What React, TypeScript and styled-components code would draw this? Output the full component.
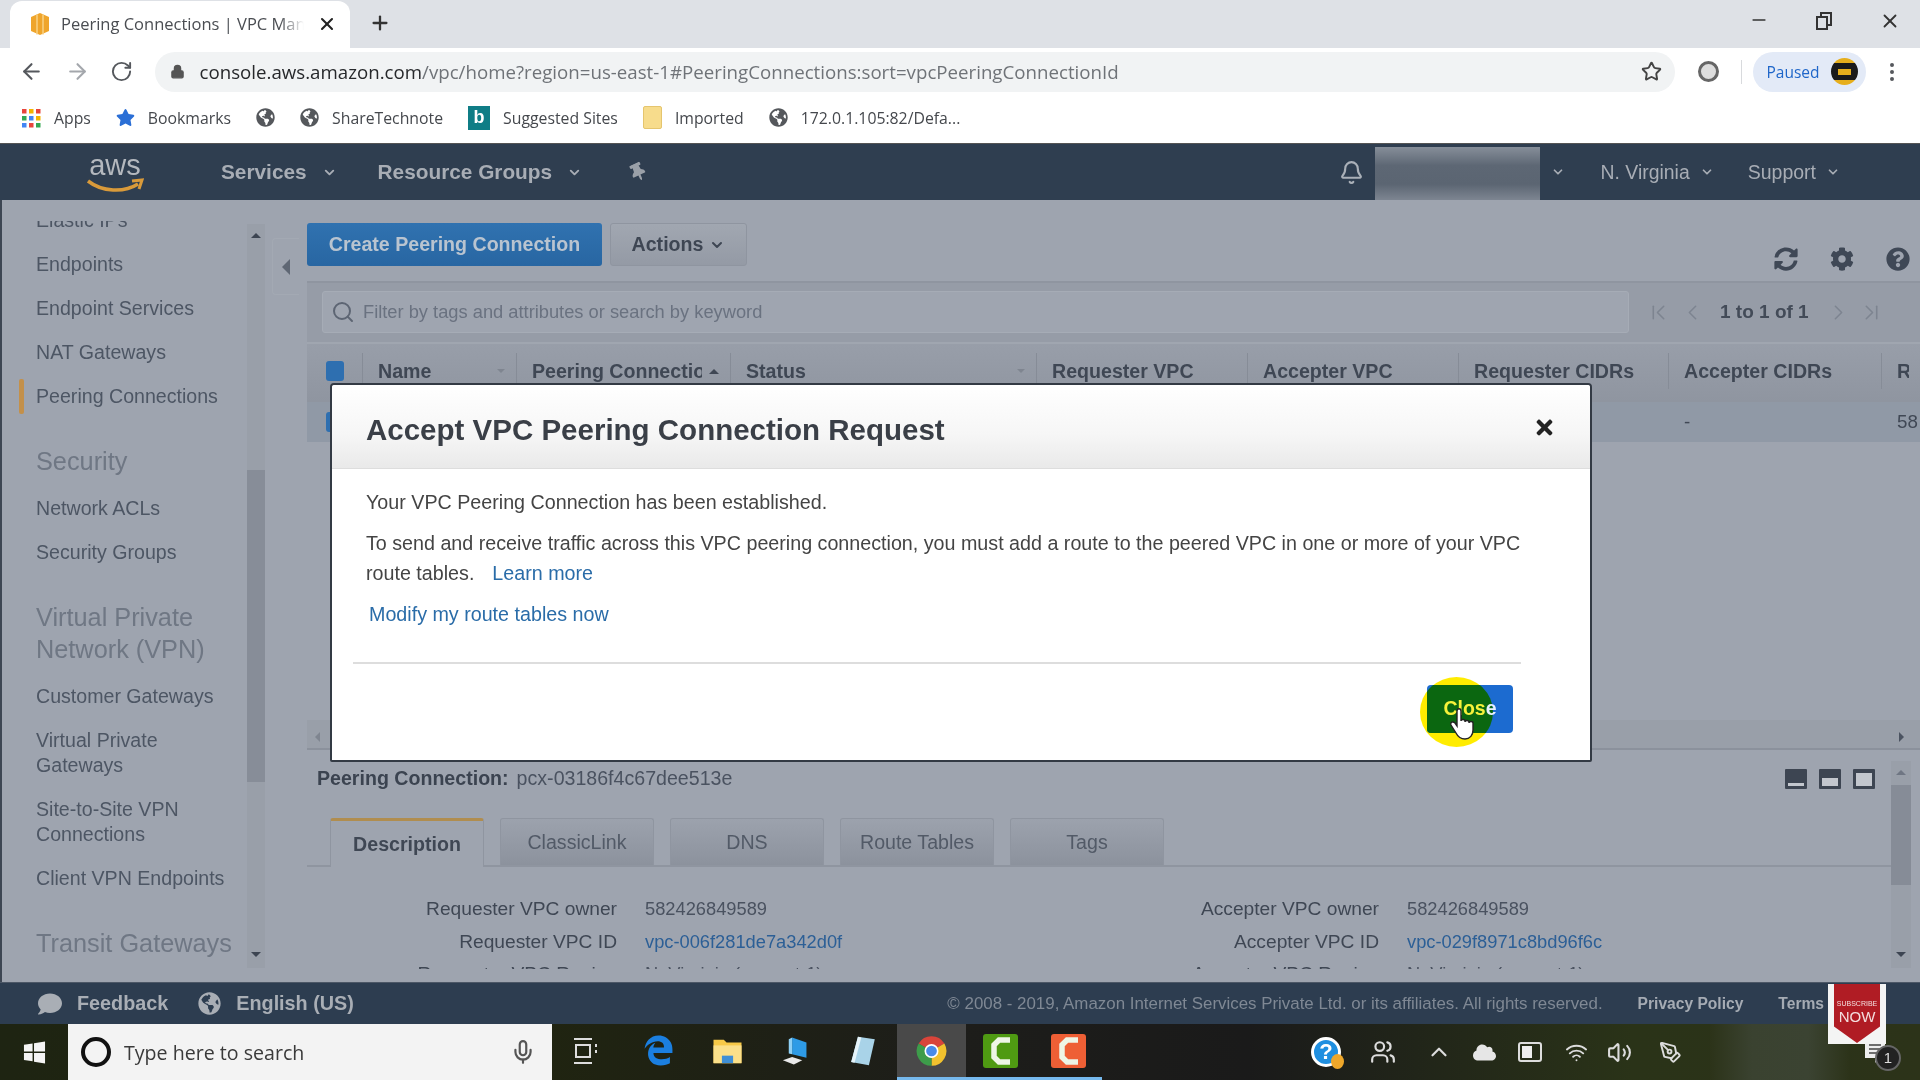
import React from "react";
import styled, { createGlobalStyle } from "styled-components";
import {
  ArrowLeft,
  ArrowRight,
  RotateCw,
  Lock,
  Star,
  MoreVertical,
  Plus,
  X,
  Minus,
  Bell,
  ChevronDown,
  Search,
  Mic,
  ChevronUp,
  Users,
  Wifi,
  Volume2,
  PenTool,
  ChevronLeft,
  ChevronRight,
  ChevronFirst,
  ChevronLast,
} from "lucide-react";
import {
  FaCog,
  FaGlobeAmericas,
  FaQuestionCircle,
  FaStar,
  FaSyncAlt,
  FaTimes,
  FaThumbtack,
  FaComment,
  FaCloud,
} from "react-icons/fa";
import { FaEdgeLegacy } from "react-icons/fa6";

const AWS_FONT = `"Liberation Sans", Arial, sans-serif`;
const UI_FONT = `"Open Sans", "Noto Sans", sans-serif`;

const GlobalStyle = createGlobalStyle`
  html, body {
    margin: 0;
    padding: 0;
    background: #9ea4af;
    overflow: hidden;
  }
`;

const Screen = styled.div`
  width: 1920px;
  height: 1080px;
  display: flex;
  flex-direction: column;
  overflow: hidden;
  position: relative;
  font-family: ${AWS_FONT};
  filter: blur(0.55px);
`;

/* browser chrome */
const TabStrip = styled.div`
  height: 48px;
  flex: none;
  background: #dee1e6;
  display: flex;
  align-items: flex-end;
  padding-left: 10px;
`;

const Tab = styled.div`
  width: 340px;
  height: 47px;
  box-sizing: border-box;
  background: #fff;
  border-radius: 12px 12px 0 0;
  display: flex;
  align-items: center;
  padding: 0 0 2px 19px;
  font: 16.5px ${UI_FONT};
  color: #4a4d52;
`;

const TabTitle = styled.span`
  width: 243px;
  margin-left: 10px;
  white-space: nowrap;
  overflow: hidden;
  -webkit-mask-image: linear-gradient(90deg, #000 90%, transparent);
  mask-image: linear-gradient(90deg, #000 90%, transparent);
`;

const TabClose = styled(X)`
  margin-left: 13px;
  color: #222;
`;

const NewTab = styled(Plus)`
  margin: 0 0 14px 19px;
  color: #333;
`;

const WindowControls = styled.div`
  margin-left: auto;
  height: 48px;
  box-sizing: border-box;
  display: flex;
  align-items: flex-start;
  gap: 45px;
  padding: 10px 19px 0 0;
  color: #333;
`;

const Toolbar = styled.div`
  height: 47px;
  flex: none;
  background: #fff;
  display: flex;
  align-items: center;
  padding-left: 19px;
  color: #5f6368;
`;

const NavArrow = styled.span<{ $faded?: boolean }>`
  width: 45.5px;
  display: flex;
  color: ${(p) => (p.$faded ? "#a4a7ac" : "#55585d")};
`;

const UrlPill = styled.div`
  width: 1520px;
  height: 40px;
  margin-left: -1px;
  box-sizing: border-box;
  background: #f1f3f4;
  border-radius: 20px;
  display: flex;
  align-items: center;
  padding: 0 13px 0 15px;
`;

const UrlText = styled.div`
  margin-left: 15px;
  font: 18.7px ${UI_FONT};
  color: #6f7378;
  white-space: nowrap;
  flex: 1;
`;

const UrlHost = styled.span`
  color: #26282b;
`;

const ExtensionDot = styled.span`
  width: 15px;
  height: 15px;
  margin-left: 23px;
  border-radius: 50%;
  border: 3px solid #666;
  background: #ddd;
`;

const ToolbarRule = styled.span`
  width: 1px;
  height: 24px;
  margin: 0 11px 0 22px;
  background: #d8dadd;
`;

const PausedPill = styled.div`
  width: 113px;
  height: 40px;
  box-sizing: border-box;
  background: #e3eaf7;
  border-radius: 20px;
  display: flex;
  align-items: center;
  padding-left: 14px;
  font: 15.5px ${UI_FONT};
  color: #1f66c9;
`;

const Avatar = styled.span`
  width: 27px;
  height: 27px;
  margin-left: 11px;
  border-radius: 50%;
  background: linear-gradient(#e6ae1c 0 20%, #1a1a1a 20% 80%, #e6ae1c 80%);
  display: flex;
  align-items: center;
  justify-content: center;
  &::after {
    content: "";
    width: 13px;
    height: 6px;
    background: #e6ae1c;
  }
`;

const MenuDots = styled(MoreVertical)`
  margin-left: 14px;
  color: #55585d;
`;

const BookmarksBar = styled.div`
  height: 48px;
  flex: none;
  box-sizing: border-box;
  padding: 0 0 3px 21px;
  background: #fff;
  display: flex;
  align-items: center;
  font: 15.8px ${UI_FONT};
  color: #45484d;
`;

const Bookmark = styled.span`
  display: flex;
  align-items: center;
  gap: 13px;
  margin-right: 25px;
  white-space: nowrap;
`;

const BookmarkGlobe = styled(FaGlobeAmericas)`
  color: #55585c;
  font-size: 19px;
`;

const BingSquare = styled.span`
  width: 22px;
  height: 24px;
  background: #0f7d86;
  color: #fff;
  font: bold 18px ${AWS_FONT};
  display: flex;
  align-items: center;
  justify-content: center;
`;

const FolderTile = styled.span`
  width: 17px;
  height: 21px;
  background: #f7dc8c;
  border: 1px solid #e5c56e;
  border-radius: 2px;
`;

/* aws console header */
const ConsoleNav = styled.div`
  height: 57px;
  flex: none;
  background: #2f3e50;
  border-top: 1px solid #555;
  box-sizing: border-box;
  display: flex;
  align-items: center;
  color: #a8adb5;
  font: bold 20px ${AWS_FONT};
`;

const AwsLogo = styled.div`
  width: 60px;
  margin: 4px 0 0 85px;
  display: flex;
  flex-direction: column;
  align-items: center;
  font: 29px/26px ${AWS_FONT};
  color: #b4b8be;
`;

const NavMenu = styled.span<{ $left: number; $weight?: number; $size?: number; $gap?: number }>`
  display: flex;
  align-items: center;
  gap: ${(p) => p.$gap ?? 15}px;
  margin-left: ${(p) => p.$left}px;
  font-weight: ${(p) => p.$weight ?? 700};
  font-size: ${(p) => p.$size ?? 20.8}px;
  white-space: nowrap;
`;

const Pin = styled(FaThumbtack)`
  margin-left: 47px;
  font-size: 18px;
  color: #9aa0a8;
  transform: rotate(-25deg);
`;

const NavBell = styled(Bell)`
  margin-left: auto;
  color: #aab0b8;
`;

const AccountBlur = styled.div`
  width: 165px;
  height: 53px;
  margin: 3px 0 0 11px;
  background: linear-gradient(#868e99, #5d6774 35%, #5b6572 70%, #7d8591);
`;

const Caret = styled(ChevronDown)`
  stroke-width: 3;
`;

const AccountCaret = styled(Caret)`
  margin: 0 36px 0 11px;
`;

/* page body */
const Body = styled.div`
  flex: 1;
  min-height: 0;
  display: flex;
  background: #9ea4af;
  border-left: 2px solid #3d4653;
`;

const Sidebar = styled.aside`
  width: 305px;
  flex: none;
  display: flex;
  align-items: flex-start;
  padding-top: 21px;
  box-sizing: border-box;
`;

const SideScroll = styled.div`
  width: 245px;
  height: 747px;
  overflow: hidden;
`;

const SideList = styled.div`
  margin-top: -22.5px;
  padding-left: 34px;
  width: 205px;
`;

const SideItem = styled.div<{ $active?: boolean }>`
  position: relative;
  padding: 9.5px 0;
  font-size: 19.6px;
  line-height: 25px;
  color: #4d5664;
  ${(p) =>
    p.$active &&
    `&::before {
      content: "";
      position: absolute;
      left: -17px;
      top: 4px;
      bottom: 5px;
      width: 5px;
      background: #c3904a;
      border-radius: 2px;
    }`}
`;

const SideHeading = styled.div`
  padding: 26px 0 10px;
  font-size: 25.3px;
  line-height: 32px;
  color: #6f7784;
`;

const SideTrack = styled.div`
  width: 18px;
  height: 744px;
  margin-top: 3px;
  background: #999fa9;
  display: flex;
  flex-direction: column;
  align-items: center;
  justify-content: space-between;
  position: relative;
`;

const SideThumb = styled.div`
  position: absolute;
  top: 246px;
  left: 0;
  right: 0;
  height: 312px;
  background: #878d98;
`;

const Triangle = styled.span<{ $dir: "up" | "down" | "left" | "right"; $size?: number; $color?: string }>`
  width: 0;
  height: 0;
  flex: none;
  ${(p) => {
    const s = p.$size ?? 5;
    const c = p.$color ?? "#3d4552";
    if (p.$dir === "up") return `border-left:${s}px solid transparent;border-right:${s}px solid transparent;border-bottom:${s}px solid ${c};`;
    if (p.$dir === "down") return `border-left:${s}px solid transparent;border-right:${s}px solid transparent;border-top:${s}px solid ${c};`;
    if (p.$dir === "left") return `border-top:${s}px solid transparent;border-bottom:${s}px solid transparent;border-right:${s}px solid ${c};`;
    return `border-top:${s}px solid transparent;border-bottom:${s}px solid transparent;border-left:${s}px solid ${c};`;
  }}
`;

const TrackArrowUp = styled(Triangle)`
  margin-top: 9px;
`;

const TrackArrowDown = styled(Triangle)`
  margin-bottom: 11px;
`;

const CollapseTab = styled.div`
  width: 26px;
  height: 55px;
  margin: 17px 0 0 7px;
  border: 1px solid #a3a9b3;
  border-right: none;
  border-radius: 4px 0 0 4px;
  display: flex;
  align-items: center;
  justify-content: center;
`;

const Main = styled.main`
  flex: 1;
  min-width: 0;
  display: flex;
  flex-direction: column;
`;

const ActionRow = styled.div`
  height: 81px;
  flex: none;
  box-sizing: border-box;
  padding: 23px 10px 0 0;
  display: flex;
  align-items: flex-start;
`;

const PrimaryButton = styled.div`
  width: 295px;
  height: 43px;
  border-radius: 3px;
  background: linear-gradient(#3072b0, #2866a2);
  color: #b9c4d0;
  font: bold 19.6px/43px ${AWS_FONT};
  text-align: center;
`;

const ActionsButton = styled.div`
  width: 137px;
  height: 43px;
  margin-left: 8px;
  box-sizing: border-box;
  border: 1px solid #8f95a0;
  border-radius: 3px;
  background: linear-gradient(#a1a7b1, #949aa5);
  color: #3e4653;
  font: bold 19.6px ${AWS_FONT};
  display: flex;
  align-items: center;
  justify-content: center;
  gap: 6px;
`;

const PageIcons = styled.div`
  margin: 24px 0 0 auto;
  display: flex;
  align-items: center;
  gap: 32px;
  color: #3f4856;
  font-size: 24px;
`;

const FilterBand = styled.div`
  height: 61px;
  flex: none;
  box-sizing: border-box;
  background: #969ca7;
  border-top: 2px solid #8f95a0;
  padding: 8px 0 0 15px;
  display: flex;
  align-items: flex-start;
`;

const FilterBox = styled.div`
  width: 1307px;
  height: 42px;
  box-sizing: border-box;
  background: #9fa5b0;
  border: 1px solid #a6acb6;
  border-radius: 3px;
  padding-left: 8px;
  display: flex;
  align-items: center;
  gap: 8px;
  font-size: 18.3px;
  color: #6a7280;
`;

const Pager = styled.div`
  margin: 4px 0 0 17px;
  height: 34px;
  display: flex;
  align-items: center;
  color: #7d8490;
  font: bold 19px ${AWS_FONT};
`;

const PagerFirst = styled(ChevronFirst)`
  margin-right: 9px;
`;

const PagerLast = styled(ChevronLast)`
  margin-left: 8px;
`;

const PagerText = styled.span`
  margin: 0 17px 0 15px;
  color: #434b58;
`;

const TableHead = styled.div`
  height: 60px;
  flex: none;
  display: grid;
  grid-template-columns: 55px 154px 214px 306px 211px 211px 210px 213px 1fr;
  box-sizing: border-box;
  padding-top: 9px;
  background: linear-gradient(#989ea9, #8f95a0);
  border-top: 2px solid #a0a6b0;
  overflow: hidden;
`;

const HeadCell = styled.div`
  height: 36px;
  display: flex;
  align-items: center;
  gap: 7px;
  padding: 0 11px 0 15px;
  border-left: 1px solid #868c97;
  font: bold 19.6px ${AWS_FONT};
  color: #3f4754;
  white-space: nowrap;
  overflow: hidden;
`;

const HeadLabel = styled.span`
  flex: 1;
  min-width: 0;
  overflow: hidden;
`;

const CheckCell = styled.div`
  height: 36px;
  padding-left: 19px;
  display: flex;
  align-items: center;
`;

const CheckBlue = styled.span`
  width: 18px;
  height: 20px;
  border-radius: 3px;
  background: #2e6fb0;
`;

const TableRow = styled.div`
  height: 40px;
  flex: none;
  background: #9099a6;
  display: grid;
  grid-template-columns: 55px 154px 214px 306px 211px 211px 210px 213px 1fr;
  align-items: center;
  font-size: 18.8px;
  color: #404855;
  overflow: hidden;
`;

const RowCell = styled.div<{ $col?: number }>`
  grid-column: ${(p) => p.$col ?? "auto"};
  padding-left: 16px;
  white-space: nowrap;
`;

const TableSpace = styled.div`
  flex: 1;
  min-height: 0;
  display: flex;
  align-items: flex-end;
`;

const HScroll = styled.div`
  flex: 1;
  height: 30px;
  box-sizing: border-box;
  background: #999fa9;
  border-bottom: 2px solid #8b919c;
  display: flex;
  align-items: center;
  justify-content: space-between;
  padding: 6px 16px 0 8px;
`;

const DetailPane = styled.div`
  height: 232px;
  flex: none;
  display: flex;
  overflow: hidden;
`;

const DetailMain = styled.div`
  flex: 1;
  min-width: 0;
  display: flex;
  flex-direction: column;
`;

const PaneTitleRow = styled.div`
  height: 52px;
  flex: none;
  box-sizing: border-box;
  display: flex;
  align-items: center;
  padding: 5px 16px 0 10px;
  font-size: 19.6px;
  color: #4a5260;
`;

const PaneTitle = styled.b`
  color: #3b4350;
  margin-right: 8px;
`;

const PaneSize = styled.div`
  margin-left: auto;
  display: flex;
  gap: 12px;
`;

const SizeIcon = styled.span<{ $fill: number }>`
  width: 22px;
  height: 20px;
  background: #3d4552;
  border-radius: 1px;
  box-sizing: border-box;
  padding: 0 3px 3px;
  display: flex;
  align-items: flex-end;
  &::after {
    content: "";
    width: 100%;
    height: ${(p) => p.$fill}px;
    background: #c3c7ce;
  }
`;

const TabBar = styled.div`
  height: 47px;
  margin-top: 16px;
  flex: none;
  padding-left: 23px;
  display: flex;
  gap: 16px;
  border-bottom: 2px solid #8f95a0;
`;

const PaneTab = styled.div<{ $active?: boolean }>`
  width: 154px;
  box-sizing: border-box;
  display: flex;
  align-items: center;
  justify-content: center;
  border: 1px solid #8f95a0;
  border-bottom: none;
  border-radius: 3px 3px 0 0;
  font-size: 19.6px;
  font-weight: ${(p) => (p.$active ? 700 : 400)};
  color: ${(p) => (p.$active ? "#3f4754" : "#525a67")};
  background: ${(p) => (p.$active ? "#9ea4af" : "linear-gradient(#9ca2ad, #8c929d)")};
  border-top: ${(p) => (p.$active ? "3px solid #b08d4f" : "1px solid #8f95a0")};
  margin-bottom: ${(p) => (p.$active ? "-2px" : "0")};
`;

const DetailGrid = styled.div`
  height: 102px;
  padding-top: 26px;
  box-sizing: border-box;
  overflow: hidden;
  display: flex;
`;

const DetailColumn = styled.div<{ $width: number; $label: number }>`
  width: ${(p) => p.$width}px;
  flex: none;
  display: grid;
  grid-template-columns: ${(p) => p.$label}px 1fr;
  column-gap: 28px;
  grid-auto-rows: 32.5px;
  align-items: center;
  white-space: nowrap;
`;

const DetailLabel = styled.span`
  text-align: right;
  font-size: 19.2px;
  color: #3f4754;
`;

const DetailValue = styled.span`
  font-size: 18.3px;
  color: #4a5260;
`;

const DetailLink = styled(DetailValue)`
  color: #2c5f96;
`;

const PaneScroll = styled.div`
  width: 20px;
  height: 207px;
  margin: 11px 9px 0 0;
  flex: none;
  background: #999fa9;
  display: flex;
  flex-direction: column;
  align-items: center;
  justify-content: space-between;
  position: relative;
`;

const PaneThumb = styled.div`
  position: absolute;
  top: 24px;
  left: 0;
  right: 0;
  height: 100px;
  background: #868c97;
`;

/* footer + taskbar */
const Footer = styled.footer`
  height: 42px;
  flex: none;
  background: #2d3d50;
  border-top: 1px solid #4c5766;
  box-sizing: border-box;
  display: flex;
  align-items: center;
  color: #a9aeb5;
  font: bold 19.8px ${AWS_FONT};
  padding: 0 44px 0 38px;
`;

const FootItem = styled.span<{ $left?: number }>`
  display: flex;
  align-items: center;
  gap: 15px;
  margin-left: ${(p) => p.$left ?? 0}px;
  white-space: nowrap;
`;

const Copyright = styled.span`
  margin-left: auto;
  font: 16.9px ${AWS_FONT};
  color: #7f8894;
  white-space: nowrap;
`;

const FootLink = styled.span`
  margin-left: 35px;
  font: bold 15.6px ${AWS_FONT};
  color: #a5abb3;
  white-space: nowrap;
`;

const Taskbar = styled.div`
  height: 56px;
  flex: none;
  display: flex;
  align-items: center;
  background: linear-gradient(90deg, #1e2412 0, #20250f 25%, #1d1d1a 50%, #1a1a1a 65%, #2a3318 85%, #2c3319);
  color: #ddd;
`;

const StartButton = styled.div`
  width: 68px;
  display: flex;
  justify-content: center;
`;

const SearchBox = styled.div`
  width: 484px;
  height: 56px;
  box-sizing: border-box;
  background: #f3f3f3;
  padding: 0 16px 0 13px;
  display: flex;
  align-items: center;
  font: 19.6px ${UI_FONT};
  color: #3a3a3a;
`;

const CortanaRing = styled.span`
  width: 22px;
  height: 22px;
  border: 4px solid #111;
  border-radius: 50%;
  margin-right: 13px;
`;

const SearchMic = styled(Mic)`
  margin-left: auto;
  color: #555;
`;

const TaskSlot = styled.div<{ $width: number; $active?: boolean; $running?: boolean; $trail?: number }>`
  width: ${(p) => p.$width}px;
  height: 56px;
  box-sizing: border-box;
  flex: none;
  display: flex;
  align-items: center;
  justify-content: center;
  padding-right: ${(p) => p.$trail ?? 0}px;
  background: ${(p) => (p.$active ? "#494949" : "transparent")};
  border-bottom: 3px solid ${(p) => (p.$running ? "#76b9ed" : "transparent")};
`;

const EdgeIcon = styled(FaEdgeLegacy)`
  color: #1b7fe0;
  font-size: 31px;
`;

const Tray = styled.div`
  margin-left: auto;
  height: 56px;
  display: flex;
  align-items: center;
  color: #dcdcdc;
`;

const TrayItem = styled.span<{ $width: number }>`
  width: ${(p) => p.$width}px;
  display: flex;
  justify-content: center;
`;

const HelpBadge = styled.span`
  width: 30px;
  height: 30px;
  box-sizing: border-box;
  border: 3px solid #fff;
  border-radius: 50%;
  background: #1f8fe0;
  color: #fff;
  font: bold 22px/24px ${AWS_FONT};
  text-align: center;
  position: relative;
  &::after {
    content: "";
    position: absolute;
    right: -6px;
    bottom: -5px;
    width: 13px;
    height: 15px;
    border-radius: 50%;
    background: #eea72a;
  }
`;

const ClockBlur = styled.div`
  width: 140px;
  height: 56px;
  margin-left: 20px;
  background: linear-gradient(90deg, #2c3319, #3a4230 30%, #3b4332 70%, #2c3319);
`;

const NotifyArea = styled.div`
  width: 70px;
  box-sizing: border-box;
  padding-right: 20px;
  display: flex;
  justify-content: center;
  position: relative;
`;

const NotifyCount = styled.span`
  position: absolute;
  left: 25px;
  top: 6px;
  width: 22px;
  height: 22px;
  border-radius: 50%;
  border: 2px solid #666;
  background: #222;
  color: #ddd;
  font: 15px/22px ${AWS_FONT};
  text-align: center;
`;

/* things lying over the page */
const Modal = styled.div`
  position: absolute;
  left: 330px;
  top: 383px;
  width: 1262px;
  height: 379px;
  box-sizing: border-box;
  background: #fff;
  border: 2px solid #333a44;
  border-radius: 4px 4px 2px 2px;
  display: flex;
  flex-direction: column;
  color: #444;
`;

const ModalHeader = styled.div`
  height: 84px;
  flex: none;
  box-sizing: border-box;
  padding: 7px 34px 0 34px;
  display: flex;
  align-items: center;
  justify-content: space-between;
  background: linear-gradient(#fff, #f6f6f6 60%, #e9e9e9);
  border-bottom: 1px solid #ddd;
  border-radius: 3px 3px 0 0;
`;

const ModalTitle = styled.h2`
  margin: 0;
  font: bold 29.5px ${AWS_FONT};
  color: #3a3f47;
`;

const ModalClose = styled(FaTimes)`
  margin-top: -6px;
  font-size: 23px;
  color: #222;
`;

const ModalBody = styled.div`
  padding: 18px 34px 0;
  height: 193px;
  box-sizing: border-box;
  flex: none;
  font-size: 19.7px;
  line-height: 30px;
`;

const ModalLine = styled.p`
  margin: 0 0 11px;
`;

const ModalLink = styled.a`
  color: #2a6ca8;
`;

const LearnMore = styled(ModalLink)`
  margin-left: 18px;
`;

const ModifyLink = styled(ModalLink)`
  margin-left: 3px;
`;

const ModalRule = styled.hr`
  margin: 0 0 0 21px;
  width: 1168px;
  border: none;
  border-top: 2px solid #ddd;
  flex: none;
`;

const ModalFooter = styled.div`
  display: flex;
  justify-content: flex-end;
  padding: 21px 77px 0 0;
`;

const Spotlight = styled.div`
  position: relative;
  width: 86px;
  height: 48px;
`;

const SpotCircle = styled.span`
  position: absolute;
  left: -7px;
  top: -8px;
  width: 73px;
  height: 70px;
  border-radius: 50%;
  background: #ffec00;
`;

const CloseButton = styled.div`
  position: absolute;
  inset: 0;
  overflow: hidden;
  border-radius: 4px;
  background: #1c6bd0;
  color: #fff;
  font: bold 19.5px/46px ${AWS_FONT};
  text-align: center;
  &::before {
    content: "";
    position: absolute;
    left: -7px;
    top: -8px;
    width: 73px;
    height: 70px;
    border-radius: 50%;
    background: #0b6710;
  }
`;

const CloseLabel = styled.span`
  position: relative;
  color: #f7f23a;
`;

const CloseTail = styled.span`
  color: #e8f0ff;
`;

const HandCursor = styled.svg`
  position: absolute;
  left: 23px;
  top: 23px;
  width: 24px;
  height: 33px;
`;

const SubscribeBadge = styled.div`
  position: absolute;
  left: 1828px;
  top: 984px;
  width: 58px;
  height: 60px;
  background: #f4f4f4;
  display: flex;
  justify-content: center;
`;

const Ribbon = styled.div`
  width: 46px;
  height: 59px;
  background: #b01c24;
  clip-path: polygon(0 0, 100% 0, 100% 72%, 50% 100%, 0 72%);
  color: #f3dede;
  text-align: center;
  padding-top: 16px;
  box-sizing: border-box;
  font: 7px/8px ${AWS_FONT};
`;

const RibbonNow = styled.div`
  font-size: 15px;
  line-height: 18px;
`;

const sideTop = ["Elastic IPs", "Endpoints", "Endpoint Services", "NAT Gateways"];
const vpnItems = ["Customer Gateways", "Virtual Private Gateways", "Site-to-Site VPN Connections", "Client VPN Endpoints"];
const columns = ["Name", "Peering Connection", "Status", "Requester VPC", "Accepter VPC", "Requester CIDRs", "Accepter CIDRs", "R"];
const paneTabs = ["ClassicLink", "DNS", "Route Tables", "Tags"];

const GlobeIcon = () => <BookmarkGlobe />;

const WinLogo = () => (
  <svg width="23" height="23" viewBox="0 0 24 24" fill="#f4f4f4">
    <path d="M1 4l9-1.4V11H1zM11.5 2.3L23 .6V11H11.5zM1 12.6h9V21l-9-1.3zM11.5 12.6H23v10.8l-11.5-1.7z" />
  </svg>
);

const AppsGrid = () => (
  <svg width="20" height="20" viewBox="0 0 20 20">
    {["#e8453c", "#f4b400", "#e8453c", "#34a853", "#4285f4", "#f4b400", "#4285f4", "#e8453c", "#34a853"].map((c, i) => (
      <rect key={i} x={1 + (i % 3) * 7} y={1 + Math.floor(i / 3) * 7} width="4.5" height="4.5" fill={c} />
    ))}
  </svg>
);

const AwsBox = () => (
  <svg width="22" height="24" viewBox="0 0 22 24">
    <path d="M11 1l9 4v14l-9 4-9-4V5z" fill="#efa52c" />
    <path d="M8 2.5v20M14 2.5v20" stroke="#f9d184" strokeWidth="1.5" />
  </svg>
);

const Smile = () => (
  <svg width="58" height="18" viewBox="0 0 58 18" fill="none">
    <path d="M2 3c14 11 36 12 50 3" stroke="#d99a3a" strokeWidth="3.5" />
    <path d="M46 3l10-1-3 9" stroke="#d99a3a" strokeWidth="3" />
  </svg>
);

const FolderIcon = () => (
  <svg width="31" height="28" viewBox="0 0 32 30">
    <path d="M1 3h11l3 3h16v22H1z" fill="#f7c948" />
    <path d="M1 9h30v19H1z" fill="#fbe08a" />
    <path d="M10 28v-8h12v8z" fill="#3f8fd6" />
  </svg>
);

const ComputerIcon = () => (
  <svg width="31" height="32" viewBox="0 0 36 38">
    <path d="M14 3l17 6v18l-17-4z" fill="#2e9be6" />
    <path d="M14 3l-4 2v17l4 1z" fill="#8fd0f5" />
    <path d="M3 30l11-4 12 4-10 5z" fill="#e9e9e9" />
  </svg>
);

const NotesIcon = () => (
  <svg width="28" height="32" viewBox="0 0 32 38">
    <path d="M10 2l20 3-7 31L2 32z" fill="#a9d3e8" />
    <path d="M10 2l4 1-8 30-4-1z" fill="#e6f3f9" />
  </svg>
);

const ChromeIcon = () => (
  <svg width="33" height="36" viewBox="0 0 40 40">
    <path d="M20 20L4.4 11A18 18 0 0 1 35.6 11Z" fill="#d9443a" />
    <path d="M20 20L35.6 11A18 18 0 0 1 20 38Z" fill="#f2c22e" />
    <path d="M20 20L20 38A18 18 0 0 1 4.4 11Z" fill="#3d9c4a" />
    <circle cx="20" cy="20" r="8.5" fill="#fff" />
    <circle cx="20" cy="20" r="6.5" fill="#4a8be8" />
  </svg>
);

const CamtasiaIcon = ({ color }: { color: string }) => (
  <svg width="35" height="34" viewBox="0 0 35 34">
    <rect width="35" height="34" rx="3" fill={color} />
    <path d="M27 6H16l-5 5v12l5 5h11" stroke="#eef5e6" strokeWidth="5.5" fill="none" />
  </svg>
);

const BatteryIcon = () => (
  <svg width="24" height="22" viewBox="0 0 24 22">
    <rect x="1" y="2" width="22" height="18" rx="2" fill="none" stroke="#ddd" strokeWidth="2" />
    <rect x="4" y="5" width="10" height="12" fill="#eee" />
  </svg>
);

const NotifyIcon = () => (
  <svg width="22" height="26" viewBox="0 0 22 26">
    <path d="M1 1h20v18h-6l-4 5v-5H1z" fill="#eee" />
    <path d="M5 6h12M5 10h12M5 14h12" stroke="#444" strokeWidth="1.5" />
  </svg>
);

export default function App() {
  return (
    <Screen>
      <GlobalStyle />
      <TabStrip>
        <Tab>
          <AwsBox />
          <TabTitle>Peering Connections | VPC Management</TabTitle>
          <TabClose size={20} strokeWidth={2.5} />
        </Tab>
        <NewTab size={22} strokeWidth={2.5} />
        <WindowControls>
          <Minus size={20} />
          <svg width="20" height="22" viewBox="0 0 20 22" fill="none" stroke="#333" strokeWidth="2">
            <rect x="3" y="7" width="10" height="12" />
            <path d="M7 7V3h10v12h-4" />
          </svg>
          <X size={22} />
        </WindowControls>
      </TabStrip>

      <Toolbar>
        <NavArrow>
          <ArrowLeft size={25} />
        </NavArrow>
        <NavArrow $faded>
          <ArrowRight size={25} />
        </NavArrow>
        <NavArrow>
          <RotateCw size={23} />
        </NavArrow>
        <UrlPill>
          <Lock size={15} fill="#555" color="#555" />
          <UrlText>
            <UrlHost>console.aws.amazon.com</UrlHost>/vpc/home?region=us-east-1#PeeringConnections:sort=vpcPeeringConnectionId
          </UrlText>
          <Star size={21} color="#444" strokeWidth={2.2} />
        </UrlPill>
        <ExtensionDot />
        <ToolbarRule />
        <PausedPill>
          Paused
          <Avatar />
        </PausedPill>
        <MenuDots size={24} />
      </Toolbar>

      <BookmarksBar>
        <Bookmark>
          <AppsGrid />
          Apps
        </Bookmark>
        <Bookmark>
          <FaStar color="#2b6fd6" size={19} />
          Bookmarks
        </Bookmark>
        <Bookmark>
          <GlobeIcon />
        </Bookmark>
        <Bookmark>
          <GlobeIcon />
          ShareTechnote
        </Bookmark>
        <Bookmark>
          <BingSquare>b</BingSquare>
          Suggested Sites
        </Bookmark>
        <Bookmark>
          <FolderTile />
          Imported
        </Bookmark>
        <Bookmark>
          <GlobeIcon />
          172.0.1.105:82/Defa...
        </Bookmark>
      </BookmarksBar>

      <ConsoleNav>
        <AwsLogo>
          aws
          <Smile />
        </AwsLogo>
        <NavMenu $left={76}>
          Services
          <Caret size={15} />
        </NavMenu>
        <NavMenu $left={41}>
          Resource Groups
          <Caret size={15} />
        </NavMenu>
        <Pin />
        <NavBell size={25} />
        <AccountBlur />
        <AccountCaret size={14} />
        <NavMenu $left={0} $weight={400} $size={19.4} $gap={10}>
          N. Virginia
          <Caret size={14} />
        </NavMenu>
        <NavMenu $left={34} $weight={400} $size={19.5} $gap={10}>
          Support
          <Caret size={14} />
        </NavMenu>
        <NavMenu $left={80} />
      </ConsoleNav>

      <Body>
        <Sidebar>
          <SideScroll>
            <SideList>
              {sideTop.map((item) => (
                <SideItem key={item}>{item}</SideItem>
              ))}
              <SideItem $active>Peering Connections</SideItem>
              <SideHeading>Security</SideHeading>
              <SideItem>Network ACLs</SideItem>
              <SideItem>Security Groups</SideItem>
              <SideHeading>Virtual Private Network (VPN)</SideHeading>
              {vpnItems.map((item) => (
                <SideItem key={item}>{item}</SideItem>
              ))}
              <SideHeading>Transit Gateways</SideHeading>
            </SideList>
          </SideScroll>
          <SideTrack>
            <TrackArrowUp $dir="up" />
            <SideThumb />
            <TrackArrowDown $dir="down" />
          </SideTrack>
          <CollapseTab>
            <Triangle $dir="left" $size={8} $color="#5f6774" />
          </CollapseTab>
        </Sidebar>

        <Main>
          <ActionRow>
            <PrimaryButton>Create Peering Connection</PrimaryButton>
            <ActionsButton>
              Actions
              <ChevronDown size={16} strokeWidth={3} />
            </ActionsButton>
            <PageIcons>
              <FaSyncAlt />
              <FaCog />
              <FaQuestionCircle />
            </PageIcons>
          </ActionRow>

          <FilterBand>
            <FilterBox>
              <Search size={24} color="#5d6573" />
              Filter by tags and attributes or search by keyword
            </FilterBox>
            <Pager>
              <PagerFirst size={25} strokeWidth={1.5} />
              <ChevronLeft size={25} strokeWidth={1.5} />
              <PagerText>1 to 1 of 1</PagerText>
              <ChevronRight size={25} strokeWidth={1.5} />
              <PagerLast size={25} strokeWidth={1.5} />
            </Pager>
          </FilterBand>

          <TableHead>
            <CheckCell>
              <CheckBlue />
            </CheckCell>
            {columns.map((c, i) => (
              <HeadCell key={c}>
                <HeadLabel>{c}</HeadLabel>
                {i === 0 && <Triangle $dir="down" $size={4} $color="#7f8590" />}
                {i === 1 && <Triangle $dir="up" $size={5} $color="#3f4754" />}
                {i === 2 && <Triangle $dir="down" $size={4} $color="#7f8590" />}
              </HeadCell>
            ))}
          </TableHead>

          <TableRow>
            <CheckCell>
              <CheckBlue />
            </CheckCell>
            <RowCell $col={8}>-</RowCell>
            <RowCell $col={9}>58</RowCell>
          </TableRow>

          <TableSpace>
            <HScroll>
              <Triangle $dir="left" $size={5} $color="#7f8590" />
              <Triangle $dir="right" $size={5} $color="#4b5361" />
            </HScroll>
          </TableSpace>

          <DetailPane>
            <DetailMain>
              <PaneTitleRow>
                <PaneTitle>Peering Connection:</PaneTitle>
                pcx-03186f4c67dee513e
                <PaneSize>
                  <SizeIcon $fill={3} />
                  <SizeIcon $fill={8} />
                  <SizeIcon $fill={13} />
                </PaneSize>
              </PaneTitleRow>
              <TabBar>
                <PaneTab $active>Description</PaneTab>
                {paneTabs.map((t) => (
                  <PaneTab key={t}>{t}</PaneTab>
                ))}
              </TabBar>
              <DetailGrid>
                <DetailColumn $width={772} $label={310}>
                  <DetailLabel>Requester VPC owner</DetailLabel>
                  <DetailValue>582426849589</DetailValue>
                  <DetailLabel>Requester VPC ID</DetailLabel>
                  <DetailLink>vpc-006f281de7a342d0f</DetailLink>
                  <DetailLabel>Requester VPC Region</DetailLabel>
                  <DetailValue>N. Virginia (us-east-1)</DetailValue>
                </DetailColumn>
                <DetailColumn $width={480} $label={300}>
                  <DetailLabel>Accepter VPC owner</DetailLabel>
                  <DetailValue>582426849589</DetailValue>
                  <DetailLabel>Accepter VPC ID</DetailLabel>
                  <DetailLink>vpc-029f8971c8bd96f6c</DetailLink>
                  <DetailLabel>Accepter VPC Region</DetailLabel>
                  <DetailValue>N. Virginia (us-east-1)</DetailValue>
                </DetailColumn>
              </DetailGrid>
            </DetailMain>
            <PaneScroll>
              <TrackArrowUp $dir="up" $color="#6f7683" />
              <PaneThumb />
              <TrackArrowDown $dir="down" />
            </PaneScroll>
          </DetailPane>
        </Main>
      </Body>

      <Footer>
        <FootItem>
          <FaComment size={24} />
          Feedback
        </FootItem>
        <FootItem $left={30}>
          <FaGlobeAmericas size={23} />
          English (US)
        </FootItem>
        <Copyright>© 2008 - 2019, Amazon Internet Services Private Ltd. or its affiliates. All rights reserved.</Copyright>
        <FootLink>Privacy Policy</FootLink>
        <FootLink>Terms of Use</FootLink>
      </Footer>

      <Taskbar>
        <StartButton>
          <WinLogo />
        </StartButton>
        <SearchBox>
          <CortanaRing />
          Type here to search
          <SearchMic size={26} />
        </SearchBox>
        <TaskSlot $width={71} $trail={5}>
          <svg width="26" height="28" viewBox="0 0 26 28" fill="none" stroke="#ddd" strokeWidth="2">
            <path d="M2 2h18M2 26h18" />
            <rect x="4" y="8" width="14" height="12" />
            <path d="M24 7v3M24 13v3" />
          </svg>
        </TaskSlot>
        <TaskSlot $width={70}>
          <EdgeIcon />
        </TaskSlot>
        <TaskSlot $width={68}>
          <FolderIcon />
        </TaskSlot>
        <TaskSlot $width={68}>
          <ComputerIcon />
        </TaskSlot>
        <TaskSlot $width={68}>
          <NotesIcon />
        </TaskSlot>
        <TaskSlot $width={69} $active $running>
          <ChromeIcon />
        </TaskSlot>
        <TaskSlot $width={68} $running>
          <CamtasiaIcon color="#4f9a12" />
        </TaskSlot>
        <TaskSlot $width={68} $running>
          <CamtasiaIcon color="#ee5f35" />
        </TaskSlot>
        <Tray>
          <TrayItem $width={68}>
            <HelpBadge>?</HelpBadge>
          </TrayItem>
          <TrayItem $width={46}>
            <Users size={26} />
          </TrayItem>
          <TrayItem $width={66}>
            <ChevronUp size={26} />
          </TrayItem>
          <TrayItem $width={24}>
            <FaCloud size={23} color="#e6e6e6" />
          </TrayItem>
          <TrayItem $width={68}>
            <BatteryIcon />
          </TrayItem>
          <TrayItem $width={24}>
            <Wifi size={23} />
          </TrayItem>
          <TrayItem $width={62}>
            <Volume2 size={25} />
          </TrayItem>
          <TrayItem $width={40}>
            <PenTool size={23} />
          </TrayItem>
          <ClockBlur />
          <NotifyArea>
            <NotifyIcon />
            <NotifyCount>1</NotifyCount>
          </NotifyArea>
        </Tray>
      </Taskbar>

      <Modal>
        <ModalHeader>
          <ModalTitle>Accept VPC Peering Connection Request</ModalTitle>
          <ModalClose />
        </ModalHeader>
        <ModalBody>
          <ModalLine>Your VPC Peering Connection has been established.</ModalLine>
          <ModalLine>
            To send and receive traffic across this VPC peering connection, you must add a route to the peered VPC in one or more of your VPC route tables.
            <LearnMore>Learn more</LearnMore>
          </ModalLine>
          <ModalLine>
            <ModifyLink>Modify my route tables now</ModifyLink>
          </ModalLine>
        </ModalBody>
        <ModalRule />
        <ModalFooter>
          <Spotlight>
            <SpotCircle />
            <CloseButton>
              <CloseLabel>
                Clos<CloseTail>e</CloseTail>
              </CloseLabel>
            </CloseButton>
            <HandCursor viewBox="0 0 24 33">
              <path
                d="M7 3c0-3 4-3 4 0v10c0-2 4-2 4 0v1c0-2 4-2 4 0v1c0-2 4-2 4 0v7c0 5-3 9-8 9s-7-2-9-6l-5-8c-1-3 2-4 4-2l2 3z"
                fill="#fff"
                stroke="#222"
                strokeWidth="1.4"
              />
            </HandCursor>
          </Spotlight>
        </ModalFooter>
      </Modal>

      <SubscribeBadge>
        <Ribbon>
          SUBSCRIBE
          <RibbonNow>NOW</RibbonNow>
        </Ribbon>
      </SubscribeBadge>
    </Screen>
  );
}
